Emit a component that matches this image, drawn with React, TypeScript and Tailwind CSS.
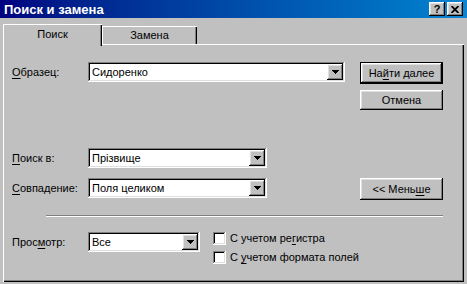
import type { ReactNode } from "react";

// Win98-style bevels
const raised =
  "shadow-[inset_-1px_-1px_#000,inset_1px_1px_#fff,inset_-2px_-2px_#808080,inset_2px_2px_#dfdfdf]";
const sunken =
  "shadow-[inset_-1px_-1px_#fff,inset_1px_1px_#808080,inset_-2px_-2px_#dfdfdf,inset_2px_2px_#000]";
const defaultBtn =
  "shadow-[inset_0_0_0_1px_#000,inset_-2px_-2px_#000,inset_2px_2px_#fff,inset_-3px_-3px_#808080,inset_3px_3px_#dfdfdf]";

function U({ children }: { children: ReactNode }) {
  return <span className="underline underline-offset-2">{children}</span>;
}

function Arrow() {
  return (
    <svg width="7" height="4" viewBox="0 0 7 4" shapeRendering="crispEdges">
      <rect x="0" y="0" width="7" height="1" fill="#000" />
      <rect x="1" y="1" width="5" height="1" fill="#000" />
      <rect x="2" y="2" width="3" height="1" fill="#000" />
      <rect x="3" y="3" width="1" height="1" fill="#000" />
    </svg>
  );
}

function Combo({ value, className }: { value: string; className: string }) {
  return (
    <div className={`flex h-[20px] bg-white ${sunken} ${className}`}>
      <span className="flex-1 pl-[4px] flex items-center leading-none">{value}</span>
      <div className={`m-[2px] w-[16px] bg-[#c0c0c0] flex items-center justify-center ${raised}`}>
        <Arrow />
      </div>
    </div>
  );
}

function Button({
  children,
  isDefault,
  className,
}: {
  children: ReactNode;
  isDefault?: boolean;
  className: string;
}) {
  return (
    <div
      className={`w-[83px] flex items-center justify-center bg-[#c0c0c0] leading-none ${
        isDefault ? defaultBtn : raised
      } ${className}`}
    >
      {children}
    </div>
  );
}

function Check({ children }: { children: ReactNode }) {
  return (
    <div className="flex items-center h-[13px]">
      <div className={`w-[13px] h-[13px] bg-white ${sunken}`} />
      <span className="ml-[4px] leading-none">{children}</span>
    </div>
  );
}

export default function App() {
  return (
    <div className="w-[467px] h-[284px] overflow-hidden bg-[#c0c0c0] text-[11px] text-black font-['Liberation_Sans',Arial,sans-serif] select-none">
      {/* Title bar */}
      <div className="h-[18px] flex items-center justify-between pl-[4px] pr-[4px] bg-linear-to-r from-[#000080] to-[#1084d0]">
        <span className="text-white font-bold text-[13px] leading-none">Поиск и замена</span>
        <div className="flex gap-[2px]">
          <div className={`w-[16px] h-[14px] bg-[#c0c0c0] flex items-center justify-center font-bold text-[11px] leading-none ${raised}`}>
            ?
          </div>
          <div className={`w-[16px] h-[14px] bg-[#c0c0c0] flex items-center justify-center ${raised}`}>
            <svg width="8" height="7" viewBox="0 0 8 7">
              <path d="M0.5 0L7.5 7M7.5 0L0.5 7" stroke="#000" strokeWidth="1.8" />
            </svg>
          </div>
        </div>
      </div>

      {/* Tabs */}
      <div className="mt-[6px] h-[20px] flex items-end pl-[3px] relative z-10">
        <div className="w-[99px] h-[22px] mb-[-2px] flex items-center justify-center bg-[#c0c0c0] pb-[1px] shadow-[inset_1px_1px_#fff,inset_-1px_0_#000,inset_-2px_0_#808080]">
          Поиск
        </div>
        <div className="w-[95px] h-[18px] flex items-center justify-center pt-[1px] shadow-[inset_1px_1px_#fff,inset_-1px_0_#000,inset_-2px_0_#808080]">
          Замена
        </div>
      </div>

      {/* Panel */}
      <div className="ml-[3px] w-[461px] h-[238px] pt-[18px] pl-[9px] shadow-[inset_1px_1px_#fff,inset_-1px_-1px_#000,inset_-2px_-2px_#808080]">
        <div className="flex items-start h-[22px]">
          <div className="w-[76px] h-[20px] flex items-center">
            <U>О</U>бразец:
          </div>
          <Combo value="Сидоренко" className="w-[257px]" />
          <Button isDefault className="ml-[15px] h-[22px]">
            На<U>й</U>ти далее
          </Button>
        </div>

        <div className="mt-[6px] flex">
          <Button className="ml-[348px] h-[20px]">Отмена</Button>
        </div>

        <div className="mt-[38px] flex items-center h-[20px]">
          <div className="w-[76px]">
            <U>П</U>оиск в:
          </div>
          <Combo value="Прізвище" className="w-[179px]" />
        </div>

        <div className="mt-[10px] flex items-start h-[22px]">
          <div className="w-[76px] h-[20px] flex items-center">
            <U>С</U>овпадение:
          </div>
          <Combo value="Поля целиком" className="w-[179px]" />
          <Button className="ml-[93px] h-[22px]">
            &lt;&lt; Мень<U>ш</U>е
          </Button>
        </div>

        <div className="mt-[15px] ml-[34px] w-[397px] h-[2px] border-t border-t-[#808080] border-b border-b-white" />

        <div className="mt-[15px] flex items-start">
          <div className="w-[76px] h-[20px] flex items-center">
            Прос<U>м</U>отр:
          </div>
          <Combo value="Все" className="w-[112px]" />
          <div className="ml-[13px] flex flex-col gap-[6px]">
            <Check>
              С учетом ре<U>г</U>истра
            </Check>
            <Check>
              С <U>у</U>четом формата полей
            </Check>
          </div>
        </div>
      </div>
    </div>
  );
}
